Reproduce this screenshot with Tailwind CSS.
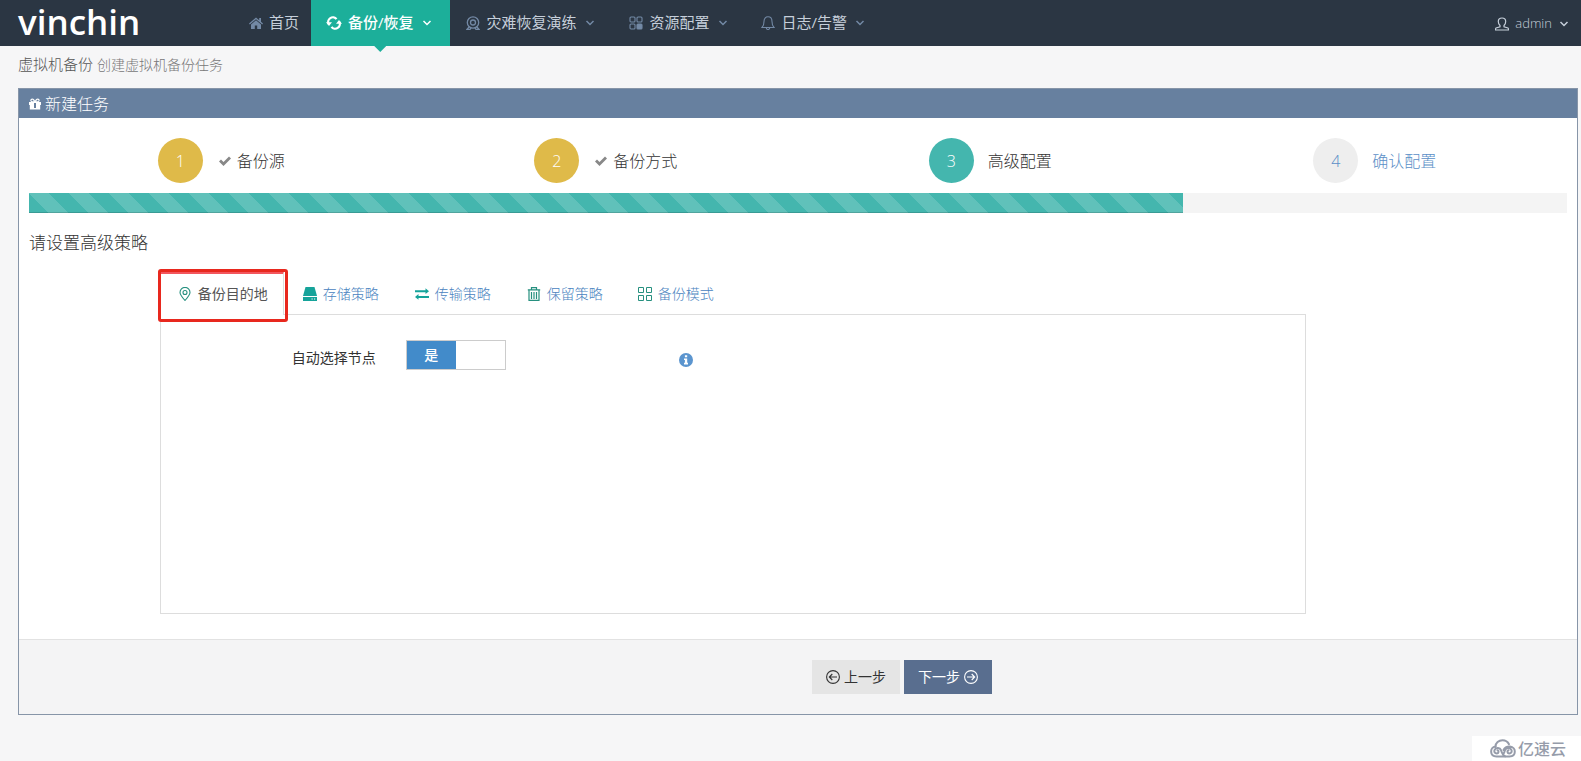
<!DOCTYPE html>
<html lang="zh-CN">
<head>
<meta charset="utf-8">
<meta name="viewport" content="width=device-width, initial-scale=1">
<title>vinchin - 新建任务</title>
<script src="https://cdn.jsdelivr.net/npm/@tailwindcss/browser@4"></script>
</head>
<body class="relative flex min-h-screen flex-col bg-[#f6f6f7] font-['Open_Sans','Noto_Sans_CJK_SC',sans-serif] text-sm text-[#333]">

<svg class="hidden" aria-hidden="true">
  <symbol id="chevron" viewBox="0 0 10 8"><path d="M1.500 2 5 5.500 8.500 2" fill="none" stroke="currentColor" stroke-width="1.500"/></symbol>
  <symbol id="check" viewBox="0 0 12 12"><path d="M0 6.500 2 4.500 4.500 7 10 1.500 12 3.500 4.500 11Z" fill="currentColor"/></symbol>
</svg>

<!-- Top navigation -->
<header class="flex h-[46px] shrink-0 items-center bg-[#2b3643] pl-[18px] pr-3">
  <a href="#" class="flex h-[46px] w-[216px] shrink-0 items-center pb-1 text-[35px] leading-none font-semibold text-white">vinchin</a>
  <nav class="flex h-[46px] items-center text-[15px] whitespace-nowrap text-[#c6cfda]">
    <a href="#" class="flex h-full items-center gap-[6px] pl-[15px] pr-3">
      <svg class="size-[14px] text-[#7389a5]" viewBox="0 0 14 14" fill="currentColor"><path d="M7 1.500 0 7.500l.8.9L7 3.200l6.200 5.200.8-.9-2-1.700V2h-1.800v2.200Z"/><path d="M7 4.200 2 8.400V13h3.800V9.500h2.400V13H12V8.400Z"/></svg>
      <span>首页</span>
    </a>
    <a href="#" class="relative flex h-full items-center bg-[#1caf9a] pl-[15px] pr-[18px] font-medium text-white">
      <svg class="mr-[6px] h-[14px] w-4" viewBox="0 0 16 14" fill="none" stroke="currentColor" stroke-width="2.200"><path d="M2.800 8.200A4.600 4.600 0 0 1 10.500 3.200"/><path d="M13.200 5.800A4.600 4.600 0 0 1 5.500 10.800"/><path d="M0 6.200h6L3 10ZM16 7.800h-6L13 4Z" fill="currentColor" stroke="none"/></svg>
      <span>备份/恢复</span>
      <svg class="ml-2 h-2 w-[10px]"><use href="#chevron"/></svg>
      <span class="absolute top-full left-1/2 h-[6px] w-3 -translate-x-1/2 bg-[#1caf9a] [clip-path:polygon(0_0,100%_0,50%_100%)]"></span>
    </a>
    <a href="#" class="flex h-full items-center pl-4 pr-[18px]">
      <svg class="mr-[7px] size-[14px] text-[#7389a5]" viewBox="0 0 14 14" fill="none" stroke="currentColor" stroke-width="1.300"><circle cx="7" cy="6.500" r="5.700"/><circle cx="7" cy="6.500" r="2.500"/><path d="M3.500 10.500 1 13.300h3L5 12M10.500 10.500l2.500 2.800h-3L9 12"/></svg>
      <span>灾难恢复演练</span>
      <svg class="ml-2 h-2 w-[10px] text-[#7389a5]"><use href="#chevron"/></svg>
    </a>
    <a href="#" class="flex h-full items-center pl-4 pr-[17px]">
      <svg class="mr-[7px] size-[14px] text-[#7389a5]" viewBox="0 0 14 14" fill="none" stroke="currentColor" stroke-width="1.100"><rect x="1" y="1" width="5" height="5" rx="1"/><rect x="8" y="1" width="5" height="5" rx="1"/><rect x="1" y="8" width="5" height="5" rx="1"/><rect x="8" y="8" width="5" height="5" rx="1" fill="currentColor"/></svg>
      <span>资源配置</span>
      <svg class="ml-2 h-2 w-[10px] text-[#7389a5]"><use href="#chevron"/></svg>
    </a>
    <a href="#" class="flex h-full items-center pl-4 pr-4">
      <svg class="mr-[7px] size-[14px] text-[#7389a5]" viewBox="0 0 14 14" fill="none" stroke="currentColor" stroke-width="1.100"><path d="M1 11.500C3 9.500 3 8 3 5.500 3 2.500 4.500.8 7 .8s4 1.700 4 4.700c0 2.500 0 4 2 6Z"/><path d="M5.300 12c.2 2 3.200 2 3.400 0"/></svg>
      <span>日志/告警</span>
      <svg class="ml-2 h-2 w-[10px] text-[#7389a5]"><use href="#chevron"/></svg>
    </a>
  </nav>
  <button type="button" class="ml-auto flex h-full items-center pt-px text-[#c6cfda]">
    <svg class="mr-[6px] size-[14px]" viewBox="0 0 14 14" fill="none" stroke="currentColor" stroke-width="1.200"><path d="M5 8.500C3.500 7 3.300 5.500 3.300 4.500 3.300 2.300 4.800 1 7 1s3.700 1.300 3.700 3.500c0 1-.2 2.500-1.700 4v1.200l4 1.300c.4.200.5.800.5 2H.5c0-1.200.1-1.800.5-2l4-1.300Z"/></svg>
    <span class="text-[13px] font-light">admin</span>
    <svg class="ml-[7px] h-2 w-[10px]"><use href="#chevron"/></svg>
  </button>
</header>

<main class="pl-[18px] pr-[3px]">
  <h1 class="flex h-[42px] items-center gap-1 pb-1 text-[15px] font-light text-[#555]">虚拟机备份 <small class="text-sm text-[#777]">创建虚拟机备份任务</small></h1>

  <section class="border border-[#8795a8] bg-white">
    <h2 class="flex h-[29px] items-center gap-1 bg-[#67809f] pl-[10px] text-base font-light text-white">
      <svg class="size-3" viewBox="0 0 12 12" fill="currentColor"><path fill-rule="evenodd" d="M0 4h2.500C.8 3.500 1 .5 3.200.5 4.800.5 5.500 1.700 6 2.700 6.500 1.700 7.200.5 8.800.5c2.200 0 2.400 3 .7 3.500H12v3h-.8v4.500H.8V7H0Zm3.300-2.300c-1.200 0-1.200 1.600 0 1.600h1.600c-.5-1-.9-1.600-1.600-1.600Zm5.400 0c-.7 0-1.100.6-1.600 1.600h1.600c1.200 0 1.200-1.600 0-1.600ZM5 5v5h2V5Z"/></svg>
      新建任务
    </h2>

    <form class="block">
      <div class="px-[10px] pb-[25px]">
        <ol class="grid h-[75px] grid-cols-4 pt-5 text-base font-light">
          <li class="flex h-[45px] items-center justify-center"><span class="mr-4 flex size-[45px] items-center justify-center rounded-full bg-[#dfba49] text-white">1</span><svg class="mr-[6px] size-3 text-[#888]"><use href="#check"/></svg>备份源</li>
          <li class="flex h-[45px] items-center justify-center"><span class="mr-4 flex size-[45px] items-center justify-center rounded-full bg-[#dfba49] text-white">2</span><svg class="mr-[6px] size-3 text-[#888]"><use href="#check"/></svg>备份方式</li>
          <li class="flex h-[45px] items-center justify-center"><span class="mr-[14px] flex size-[45px] items-center justify-center rounded-full bg-[#44b6ae] text-white">3</span>高级配置</li>
          <li class="flex h-[45px] items-center justify-center text-[#5b8fc7]"><span class="mr-[14px] flex size-[45px] items-center justify-center rounded-full bg-[#eee]">4</span>确认配置</li>
        </ol>

        <div role="progressbar" aria-label="任务进度" aria-valuenow="75" aria-valuemin="0" aria-valuemax="100" class="h-5 bg-[#f4f4f4]">
          <div class="h-full bg-[#44b6ae] bg-[linear-gradient(45deg,rgba(255,255,255,0.15)_25%,transparent_25%,transparent_50%,rgba(255,255,255,0.15)_50%,rgba(255,255,255,0.15)_75%,transparent_75%)] bg-[length:40px_40px] shadow-[inset_0_-1px_0_rgba(0,0,0,0.15)]" style="width:75%"></div>
        </div>

        <h3 class="mt-[18px] text-[17px] leading-6 font-light">请设置高级策略</h3>

        <div class="mt-4 ml-[8.5%] w-[74.5%]">
          <div role="tablist" class="flex h-[43px] items-stretch gap-[2px] text-sm font-light whitespace-nowrap text-[#4a83c0]">
            <div class="relative z-10 -mb-px flex">
              <button type="button" role="tab" aria-selected="true" class="flex items-center gap-[6px] border-t-[3px] border-r border-l border-t-[#f3565d] border-r-[#ddd] border-l-[#ddd] bg-white pr-[15px] pb-px pl-[17px] font-normal text-[#555]">
                <svg class="size-[14px] text-[#26907f]" viewBox="0 0 14 14" fill="none" stroke="currentColor" stroke-width="1.100"><path d="M7 13.500C4 10 2 7.500 2 5.400a5 5 0 0 1 10 0c0 2.100-2 4.600-5 8.100Z"/><circle cx="7" cy="5.500" r="2"/></svg>
                备份目的地
              </button>
              <span class="pointer-events-none absolute -top-[2px] -right-1 -bottom-[7px] -left-[2px] rounded-[3px] border-[3px] border-[#e8281e]"></span>
            </div>
            <button type="button" role="tab" aria-selected="false" class="flex items-center gap-[6px] px-[17px] pt-[3px]">
              <svg class="size-[14px] text-[#16a39a]" viewBox="0 0 14 14" fill="currentColor"><path d="M2.500 0h9L14 9H0Z"/><path fill-rule="evenodd" d="M0 10h14v4H0Zm8.500 1.500v1h1.200v-1Zm2.500 0v1h1.200v-1Z"/></svg>
              存储策略
            </button>
            <button type="button" role="tab" aria-selected="false" class="flex items-center gap-[6px] px-[17px] pt-[3px]">
              <svg class="size-[14px] text-[#16a39a]" viewBox="0 0 14 14" fill="currentColor"><path d="M0 3.200h10.500V1.300L14 4.200l-3.500 2.900V5.200H0ZM14 10.900H3.500v1.900L0 9.900 3.500 7v1.900H14Z"/></svg>
              传输策略
            </button>
            <button type="button" role="tab" aria-selected="false" class="flex items-center gap-[6px] px-[17px] pt-[3px]">
              <svg class="size-[14px] text-[#26907f]" viewBox="0 0 14 14" fill="none" stroke="currentColor" stroke-width="1.200"><path d="M.8 2.800h12.400M4.500 2.500V.6h5v1.900M2 3v10.400h10V3M4.500 5v7M7 5v7M9.500 5v7"/></svg>
              保留策略
            </button>
            <button type="button" role="tab" aria-selected="false" class="flex items-center gap-[6px] px-4 pt-[3px]">
              <svg class="size-[14px] text-[#26907f]" viewBox="0 0 14 14" fill="none" stroke="currentColor"><path d="M.5.500h5v5h-5ZM8.500.500h5v5h-5ZM.5 8.500h5v5h-5ZM8.500 8.500h5v5h-5Z"/></svg>
              备份模式
            </button>
          </div>

          <div role="tabpanel" class="min-h-[300px] border border-[#ddd] px-[10px] pt-[25px]">
            <div class="flex">
              <label for="auto-node" class="w-[205px] shrink-0 pt-2 text-right text-sm leading-5">自动选择节点</label>
              <div class="relative ml-[30px] flex h-[30px] w-[100px] shrink-0 border border-[#ccc] bg-white">
                <input id="auto-node" type="checkbox" role="switch" checked class="absolute inset-0 size-full cursor-pointer appearance-none">
                <span class="pointer-events-none relative flex w-1/2 items-center justify-center bg-[#428bca] text-sm font-medium text-white">是</span>
              </div>
              <button type="button" aria-label="说明" class="mt-[13px] ml-[173px] size-[14px]">
                <svg class="size-[14px] text-[#5b95cf]" viewBox="0 0 14 14"><circle cx="7" cy="7" r="7" fill="currentColor"/><path d="M5.900 2.200h2.300v2H5.900ZM5 5.400h3.200v4.400H9v1.700H5V9.800h.9V7H5Z" fill="#fff"/></svg>
              </button>
            </div>
          </div>
        </div>
      </div>

      <div class="flex h-[75px] gap-1 border-t border-[#e2e2e2] bg-[#f4f4f5] pt-5 pl-[50.9%] text-sm">
        <button type="button" class="flex h-[34px] w-[88px] items-center justify-center gap-1 bg-[#e5e5e5] text-[#333]">
          <svg class="size-[14px]" viewBox="0 0 14 14" fill="none" stroke="currentColor" stroke-width="1.100"><circle cx="7" cy="7" r="6.400"/><path d="M11 7H3.500M6.300 4 3.300 7l3 3"/></svg>
          上一步
        </button>
        <button type="button" class="flex h-[34px] w-[88px] items-center justify-center gap-1 bg-[#596e8f] text-white">
          下一步
          <svg class="size-[14px]" viewBox="0 0 14 14" fill="none" stroke="currentColor" stroke-width="1.100"><circle cx="7" cy="7" r="6.400"/><path d="M3 7h7.500M7.700 4l3 3-3 3"/></svg>
        </button>
      </div>
    </form>
  </section>
</main>

<!-- Watermark -->
<div class="absolute right-0 bottom-0 flex h-[25px] w-[109px] items-center gap-[2px] bg-white pl-[18px] text-base font-medium text-[#969caa]">
  <svg class="h-[19px] w-[26px]" viewBox="0 0 26 19" fill="none" stroke="currentColor" stroke-width="2" stroke-linecap="round"><path d="M5.500 7.500C5.500 3.800 8.700 1.200 12.500 1.200c3.200 0 5.300 1.500 6.500 4"/><path d="M7.500 11.300c1.500.4 1.500 3-.6 3.200-2.300 0-3.200-2-2.200-3.800 1.500-2.500 5.300-2.200 6.300.5.900 2.800 1.600 5 4.500 6.300H6.500C-.5 17.300-.5 8.300 5.500 7.500"/><path d="M18.500 11.300c-1.500.4-1.500 3 .6 3.200 2.300 0 3.200-2 2.200-3.800-1.500-2.500-5.300-2.200-6.300.5-.5 1.500-.9 2.600-1.500 3.600M15.500 17.500h4c7-.2 7-9.300.5-10-3.500-.2-5.500 1.500-6.500 3.500"/></svg>
  亿速云
</div>
</body>
</html>
